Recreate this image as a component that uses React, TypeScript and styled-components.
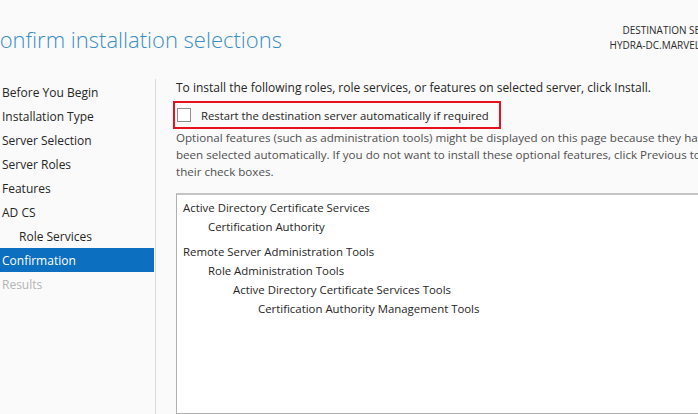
import React from 'react';
import styled, { createGlobalStyle } from 'styled-components';

const GlobalStyle = createGlobalStyle`
  html, body {
    margin: 0;
    padding: 0;
    background: #fafafa;
  }
  body {
    font-family: "Open Sans", "Noto Sans", sans-serif;
    color: #1e1e1e;
  }
`;

interface NavItem {
  label: string;
  indent?: boolean;
  active?: boolean;
  disabled?: boolean;
}

interface SelectionItem {
  label: string;
  level: number;
  groupStart?: boolean;
}

const navItems: NavItem[] = [
  { label: 'Before You Begin' },
  { label: 'Installation Type' },
  { label: 'Server Selection' },
  { label: 'Server Roles' },
  { label: 'Features' },
  { label: 'AD CS' },
  { label: 'Role Services', indent: true },
  { label: 'Confirmation', active: true },
  { label: 'Results', disabled: true },
];

const selections: SelectionItem[] = [
  { label: 'Active Directory Certificate Services', level: 0 },
  { label: 'Certification Authority', level: 1 },
  { label: 'Remote Server Administration Tools', level: 0, groupStart: true },
  { label: 'Role Administration Tools', level: 1 },
  { label: 'Active Directory Certificate Services Tools', level: 2 },
  { label: 'Certification Authority Management Tools', level: 3 },
];

const noteLines = [
  'Optional features (such as administration tools) might be displayed on this page because they have',
  'been selected automatically. If you do not want to install these optional features, click Previous to clear',
  'their check boxes.',
];

export default function App() {
  return (
    <>
      <GlobalStyle />
      <Window>
        <Header>
          <Title>Confirm installation selections</Title>
          <ServerInfo>
            <span>DESTINATION SERVER</span>
            <span>HYDRA-DC.MARVEL.local</span>
          </ServerInfo>
        </Header>
        <Body>
          <Nav>
            {navItems.map((item) => (
              <NavLink
                key={item.label}
                $indent={item.indent}
                $active={item.active}
                $disabled={item.disabled}
              >
                {item.label}
              </NavLink>
            ))}
          </Nav>
          <Content>
            <Intro>
              To install the following roles, role services, or features on selected server, click Install.
            </Intro>
            <Highlight>
              <CheckBox />
              <CheckLabel>Restart the destination server automatically if required</CheckLabel>
            </Highlight>
            <Note>
              {noteLines.map((line) => (
                <NoteLine key={line}>{line}</NoteLine>
              ))}
            </Note>
            <SelectionBox>
              {selections.map((s) => (
                <SelectionRow key={s.label} $level={s.level} $groupStart={s.groupStart}>
                  {s.label}
                </SelectionRow>
              ))}
            </SelectionBox>
          </Content>
        </Body>
      </Window>
    </>
  );
}

const Window = styled.div`
  width: 698px;
  height: 414px;
  overflow: hidden;
  display: flex;
  flex-direction: column;
  background: #fafafa;
`;

const Header = styled.div`
  height: 79px;
  display: flex;
  justify-content: space-between;
  flex-shrink: 0;
`;

const Title = styled.h1`
  margin: 0 0 0 -14px;
  padding-top: 25px;
  font-size: 22px;
  line-height: 28px;
  font-weight: 300;
  color: #3a8ec6;
  white-space: nowrap;
`;

const ServerInfo = styled.div`
  display: flex;
  flex-direction: column;
  align-items: flex-end;
  padding-top: 23px;
  margin-right: -26px;
  font-size: 10px;
  line-height: 15px;
  color: #2b2b2b;
  white-space: nowrap;
`;

const Body = styled.div`
  flex: 1;
  display: flex;
  min-height: 0;
`;

const Nav = styled.div`
  width: 154px;
  padding-right: 1px;
  padding-top: 1px;
  border-right: 1px solid #dadada;
  display: flex;
  flex-direction: column;
  flex-shrink: 0;
`;

const NavLink = styled.div<{ $indent?: boolean; $active?: boolean; $disabled?: boolean }>`
  height: 24px;
  line-height: 25px;
  padding-left: ${(p) => (p.$indent ? '19px' : '2px')};
  font-size: 12px;
  white-space: nowrap;
  background: ${(p) => (p.$active ? '#0d6fbf' : 'transparent')};
  color: ${(p) => (p.$active ? '#ffffff' : p.$disabled ? '#b4b4b4' : '#262626')};
`;

const Content = styled.div`
  flex: 1;
  min-width: 0;
  padding-left: 20px;
  display: flex;
  flex-direction: column;
`;

const Intro = styled.p`
  margin: 0;
  font-size: 12px;
  line-height: 17px;
  white-space: nowrap;
  color: #262626;
`;

const Highlight = styled.div`
  margin: 5px 0 0 -3px;
  width: 322px;
  height: 24px;
  border: 2px solid #e8111b;
  display: flex;
  align-items: center;
  padding-left: 2px;
`;

const CheckBox = styled.span`
  width: 12px;
  height: 12px;
  border: 1px solid #8f8f8f;
  background: #ffffff;
  flex-shrink: 0;
`;

const CheckLabel = styled.span`
  margin-left: 10px;
  font-size: 11.3px;
  color: #262626;
  white-space: nowrap;
`;

const Note = styled.div`
  display: flex;
  flex-direction: column;
  font-size: 11.6px;
  line-height: 17px;
  color: #505050;
`;

const NoteLine = styled.span`
  white-space: nowrap;
`;

const SelectionBox = styled.div`
  margin-top: 13px;
  flex: 1;
  margin-right: -40px;
  background: #ffffff;
  border: 1px solid #b0b0b0;
  border-top: 2px solid #c4c4c4;
  padding: 3px 0 0 6px;
`;

const SelectionRow = styled.div<{ $level: number; $groupStart?: boolean }>`
  height: 19px;
  line-height: 19px;
  margin-top: ${(p) => (p.$groupStart ? '6px' : '0')};
  padding-left: ${(p) => p.$level * 25}px;
  font-size: 11.4px;
  color: #262626;
  white-space: nowrap;
`;
